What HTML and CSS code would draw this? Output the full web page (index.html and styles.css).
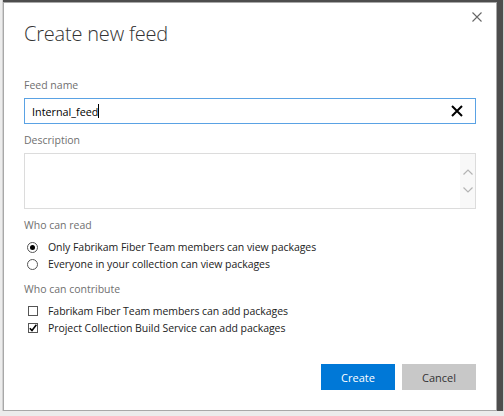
FILE: index.html
```html
<!DOCTYPE html>
<html lang="en">
<head>
    <meta charset="UTF-8">
    <meta name="viewport" content="width=device-width, initial-scale=1.0">
    <title>Create new feed</title>
    <link rel="stylesheet" href="styles.css">
</head>
<body>

<div class="dialog">
    <div class="dialog-header">
        <h1 class="dialog-title">Create new feed</h1>
        <button class="close-btn" title="Close">
            <svg width="10" height="10" viewBox="0 0 10 10">
                <path d="M0.5 0.5 L9.5 9.5 M9.5 0.5 L0.5 9.5" stroke="#666" stroke-width="1.1" fill="none"/>
            </svg>
        </button>
    </div>

    <div class="field name-field">
        <div class="field-label">Feed name</div>
        <div class="text-input focused">
            <span class="input-value">Internal_feed</span><span class="caret"></span>
            <button class="clear-btn" title="Clear">
                <svg width="12" height="12" viewBox="0 0 12 12">
                    <path d="M1 1 L11 11 M11 1 L1 11" stroke="#000" stroke-width="2" fill="none"/>
                </svg>
            </button>
        </div>
    </div>

    <div class="field desc-field">
        <div class="field-label">Description</div>
        <div class="text-area">
            <div class="scrollbar">
                <svg width="10" height="6" viewBox="0 0 10 6">
                    <path d="M0.5 5.5 L5 1 L9.5 5.5" stroke="#b4b4b4" stroke-width="1.2" fill="none"/>
                </svg>
                <svg width="10" height="6" viewBox="0 0 10 6">
                    <path d="M0.5 0.5 L5 5 L9.5 0.5" stroke="#b4b4b4" stroke-width="1.2" fill="none"/>
                </svg>
            </div>
        </div>
    </div>

    <div class="group read-group">
        <div class="field-label">Who can read</div>
        <label class="option"><span class="radio checked"></span>Only Fabrikam Fiber Team members can view packages</label>
        <label class="option"><span class="radio"></span>Everyone in your collection can view packages</label>
    </div>

    <div class="group contribute-group">
        <div class="field-label">Who can contribute</div>
        <label class="option"><span class="checkbox"></span>Fabrikam Fiber Team members can add packages</label>
        <label class="option">
            <span class="checkbox">
                <svg width="8" height="8" viewBox="0 0 8 8">
                    <path d="M0.8 4.2 L3 6.6 L7.4 0.8" stroke="#000" stroke-width="1.6" fill="none"/>
                </svg>
            </span>Project Collection Build Service can add packages
        </label>
    </div>

    <div class="actions">
        <button class="btn primary">Create</button>
        <button class="btn">Cancel</button>
    </div>
</div>

</body>
</html>
```

FILE: styles.css
```css
body {
    margin: 0;
    padding: 2px 0 0 3px;
    background-color: #ececec;
    font-family: "Open Sans", "Noto Sans", sans-serif;
    overflow: hidden;
}

.dialog {
    position: relative;
    box-sizing: border-box;
    width: 494px;
    height: 409px;
    display: flex;
    flex-direction: column;
    padding: 16px 20px 20px 20px;
    background-color: #fff;
    border: 1px solid #a8a8a8;
    box-shadow: 3px 1px 1px 3px #4d4d4d;
}

.dialog-header {
    display: flex;
}

.dialog-title {
    margin: 0;
    font-size: 20px;
    line-height: 30px;
    font-weight: 300;
    letter-spacing: -0.2px;
    color: #333;
}

.close-btn {
    position: absolute;
    top: 9px;
    right: 14px;
    padding: 0;
    border: none;
    background: none;
    display: flex;
    cursor: pointer;
}

.field {
    display: flex;
    flex-direction: column;
    gap: 5px;
}

.name-field {
    margin-top: 28px;
}

.desc-field {
    margin-top: 8px;
}

.field-label {
    font-size: 10.5px;
    line-height: 16px;
    color: #707070;
}

.text-input {
    box-sizing: border-box;
    height: 26px;
    display: flex;
    align-items: center;
    padding: 0 12px 0 7px;
    border: 1px solid #5aa2e4;
}

.input-value {
    font-size: 10.8px;
    color: #000;
}

.caret {
    width: 1px;
    height: 14px;
    background-color: #000;
}

.clear-btn {
    margin-left: auto;
    padding: 0;
    border: none;
    background: none;
    display: flex;
    cursor: pointer;
}

.text-area {
    box-sizing: border-box;
    height: 56px;
    display: flex;
    justify-content: flex-end;
    border: 1px solid #dcdcdc;
}

.scrollbar {
    width: 15px;
    display: flex;
    flex-direction: column;
    align-items: center;
    justify-content: center;
    gap: 12px;
    background-color: #f8f8f8;
}

.group {
    display: flex;
    flex-direction: column;
}

.read-group {
    margin-top: 8px;
}

.contribute-group {
    margin-top: 8.5px;
}

.group .field-label {
    margin-bottom: 5.5px;
}

.option {
    display: flex;
    align-items: center;
    height: 17px;
    padding-left: 3px;
    font-size: 10.5px;
    letter-spacing: -0.05px;
    color: #222;
}

.radio {
    box-sizing: border-box;
    width: 11px;
    height: 11px;
    margin-right: 10px;
    border: 1px solid #555;
    border-radius: 50%;
    display: flex;
    align-items: center;
    justify-content: center;
}

.radio.checked::after {
    content: "";
    width: 5px;
    height: 5px;
    border-radius: 50%;
    background-color: #000;
}

.checkbox {
    box-sizing: border-box;
    width: 10px;
    height: 10px;
    margin: 0 10px 0 1px;
    border: 1px solid #555;
    display: flex;
    align-items: center;
    justify-content: center;
}

.actions {
    margin-top: auto;
    display: flex;
    justify-content: flex-end;
    gap: 7px;
}

.btn {
    width: 74px;
    height: 26px;
    padding: 0;
    border: none;
    font-family: inherit;
    font-size: 11px;
    color: #333;
    background-color: #c8c8c8;
    cursor: pointer;
}

.btn.primary {
    color: #fff;
    background-color: #0078d7;
}
```
